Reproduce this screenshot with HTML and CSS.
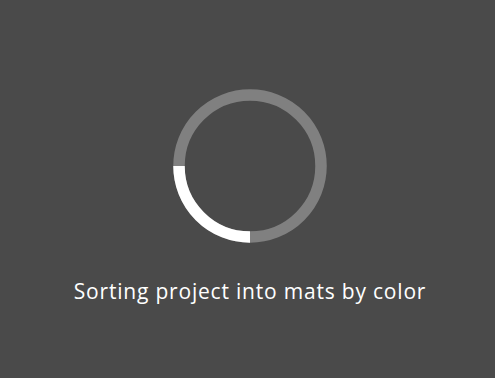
FILE: index.html
```html
<!DOCTYPE html>
<html>
<head>
<meta charset="utf-8">
<link rel="stylesheet" href="styles.css">
</head>
<body>
<main class="loader">
  <svg class="spinner" width="154" height="154" viewBox="0 0 154 154">
    <circle class="track" cx="77" cy="77" r="71" />
    <path class="arc" d="M 6 77 A 71 71 0 0 0 77 148" />
  </svg>
  <p class="label">Sorting project into mats by color</p>
</main>
</body>
</html>
```
FILE: styles.css
```css
html, body {
  margin: 0;
  height: 100%;
  background: #4a4a4a;
}
.loader {
  display: flex;
  flex-direction: column;
  align-items: center;
  padding-top: 89px;
  padding-left: 5px;
}
.spinner {
  display: block;
}
.track {
  fill: none;
  stroke: #808080;
  stroke-width: 11.5;
}
.arc {
  fill: none;
  stroke: #ffffff;
  stroke-width: 11.5;
}
.label {
  margin: 35px 0 0;
  font-family: "Open Sans", sans-serif;
  font-size: 21px;
  font-weight: 500;
  letter-spacing: 0.8px;
  line-height: 26px;
  color: #ffffff;
}
```
